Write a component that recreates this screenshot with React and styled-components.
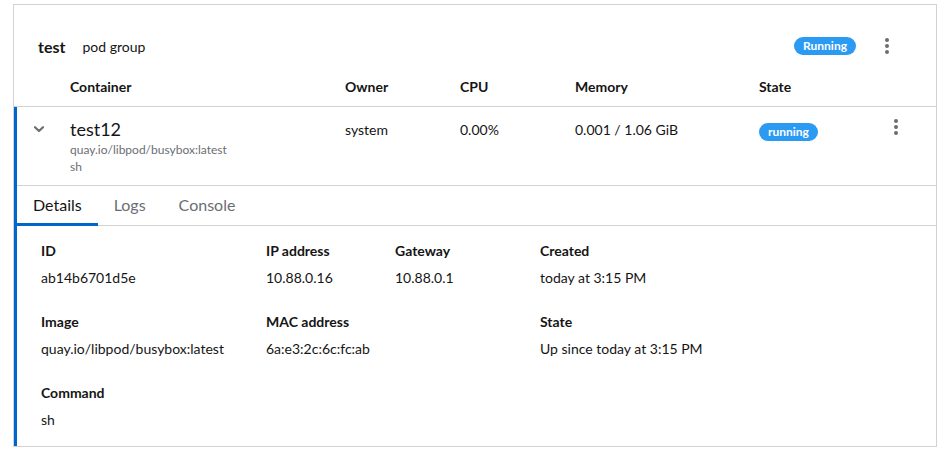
import React from "react";
import styled, { createGlobalStyle } from "styled-components";

const GlobalStyle = createGlobalStyle`
  html, body {
    margin: 0;
    padding: 0;
    background: #fff;
  }
  body {
    font-family: "Lato", "Liberation Sans", sans-serif;
    font-size: 14px;
    color: #151515;
  }
`;

const Page = styled.div`
  padding: 4px 9px 0 13px;
`;

const Card = styled.div`
  width: 922px;
  border: 1px solid #d2d2d2;
  background: #fff;
`;

const Header = styled.div`
  display: flex;
  align-items: center;
  height: 24px;
  padding: 29px 43px 1px 24px;
`;

const PodName = styled.span`
  font-size: 16px;
  font-weight: 700;
  margin-right: 17px;
`;

const PodKind = styled.span`
  font-size: 14px;
`;

const Spacer = styled.div`
  flex: 1;
`;

const Badge = styled.span`
  display: inline-flex;
  align-items: center;
  height: 18px;
  padding: 0 9px;
  border-radius: 30px;
  background: #2b9af3;
  color: #fff;
  font-size: 12px;
  font-weight: 700;
  line-height: 18px;
`;

const KebabButton = styled.button`
  display: inline-flex;
  align-items: center;
  justify-content: center;
  border: none;
  background: none;
  padding: 0;
  margin-left: ${(p) => p.$gap || 0}px;
  width: 12px;
  height: 20px;
  cursor: pointer;
`;

const HeadRow = styled.div`
  display: grid;
  grid-template-columns: 56px 275px 115px 115px 184px 1fr 80px;
  padding: 18px 0 9px;
  border-bottom: 1px solid #d2d2d2;
  font-weight: 700;
  line-height: 20px;
`;

const HeadCell = styled.div`
  grid-column: ${(p) => p.$col};
`;

const Expanded = styled.div`
  border-left: 3px solid #06c;
`;

const Row = styled.div`
  display: grid;
  grid-template-columns: 53px 275px 115px 115px 184px 1fr 80px;
  padding: 10px 0;
  border-bottom: 1px solid #d2d2d2;
`;

const Cell = styled.div`
  line-height: 25px;
  display: flex;
  flex-direction: column;
  align-items: ${(p) => (p.$center ? "center" : "flex-start")};
`;

const ToggleCell = styled.div`
  display: flex;
  justify-content: flex-start;
  padding: 9px 0 0 17px;
`;

const Name = styled.div`
  font-size: 18px;
  line-height: 24px;
`;

const Sub = styled.div`
  font-size: 12px;
  line-height: 17px;
  color: #6a6e73;
`;

const BadgeWrap = styled.div`
  padding-top: 1px;
`;

const Tabs = styled.div`
  display: flex;
  border-bottom: 1px solid #d2d2d2;
  margin-left: -3px;
`;

const Tab = styled.div`
  position: relative;
  padding: 8px 17px 10px 16px;
  font-size: 16px;
  line-height: 21px;
  color: ${(p) => (p.$active ? "#151515" : "#6a6e73")};
  &:first-child {
    padding-left: 19px;
    padding-right: 16px;
  }
  &::after {
    content: "";
    position: absolute;
    left: 0;
    right: 0;
    bottom: -1px;
    height: 3px;
    background: ${(p) => (p.$active ? "#06c" : "transparent")};
  }
`;

const DetailGrid = styled.dl`
  display: grid;
  grid-template-columns: 225px 129px 145px 1fr;
  row-gap: 23px;
  margin: 0;
  padding: 14px 24px 16px;
`;

const Group = styled.div`
  grid-column: ${(p) => p.$col || "auto"};
  display: flex;
  flex-direction: column;
  gap: 6px;
`;

const Term = styled.dt`
  font-weight: 700;
  line-height: 21px;
`;

const Desc = styled.dd`
  margin: 0;
  line-height: 21px;
`;

function Kebab({ gap }) {
  return (
    <KebabButton $gap={gap} aria-label="Actions">
      <svg width="4" height="16" viewBox="0 0 4 16">
        <circle cx="2" cy="2" r="2" fill="#6a6e73" />
        <circle cx="2" cy="8" r="2" fill="#6a6e73" />
        <circle cx="2" cy="14" r="2" fill="#6a6e73" />
      </svg>
    </KebabButton>
  );
}

function Chevron() {
  return (
    <svg width="10" height="7" viewBox="0 0 10 7">
      <path
        d="M1 1.2 L5 5 L9 1.2"
        fill="none"
        stroke="#6a6e73"
        strokeWidth="2.2"
        strokeLinecap="round"
        strokeLinejoin="round"
      />
    </svg>
  );
}

const details = [
  { label: "ID", value: "ab14b6701d5e" },
  { label: "IP address", value: "10.88.0.16" },
  { label: "Gateway", value: "10.88.0.1" },
  { label: "Created", value: "today at 3:15 PM" },
  { label: "Image", value: "quay.io/libpod/busybox:latest" },
  { label: "MAC address", value: "6a:e3:2c:6c:fc:ab", col: "2 / span 2" },
  { label: "State", value: "Up since today at 3:15 PM" },
  { label: "Command", value: "sh", col: "1" },
];

export default function App() {
  return (
    <Page>
      <GlobalStyle />
      <Card>
        <Header>
          <PodName>test</PodName>
          <PodKind>pod group</PodKind>
          <Spacer />
          <Badge>Running</Badge>
          <Kebab gap={25} />
        </Header>
        <HeadRow>
          <HeadCell $col={2}>Container</HeadCell>
          <HeadCell $col={3}>Owner</HeadCell>
          <HeadCell $col={4}>CPU</HeadCell>
          <HeadCell $col={5}>Memory</HeadCell>
          <HeadCell $col={6}>State</HeadCell>
        </HeadRow>
        <Expanded>
          <Row>
            <ToggleCell>
              <Chevron />
            </ToggleCell>
            <Cell>
              <Name>test12</Name>
              <Sub>quay.io/libpod/busybox:latest</Sub>
              <Sub>sh</Sub>
            </Cell>
            <Cell>system</Cell>
            <Cell>0.00%</Cell>
            <Cell>0.001 / 1.06 GiB</Cell>
            <Cell>
              <BadgeWrap>
                <Badge>running</Badge>
              </BadgeWrap>
            </Cell>
            <Cell $center>
              <Kebab />
            </Cell>
          </Row>
          <Tabs>
            <Tab $active>Details</Tab>
            <Tab>Logs</Tab>
            <Tab>Console</Tab>
          </Tabs>
          <DetailGrid>
            {details.map((d) => (
              <Group key={d.label} $col={d.col}>
                <Term>{d.label}</Term>
                <Desc>{d.value}</Desc>
              </Group>
            ))}
          </DetailGrid>
        </Expanded>
      </Card>
    </Page>
  );
}
